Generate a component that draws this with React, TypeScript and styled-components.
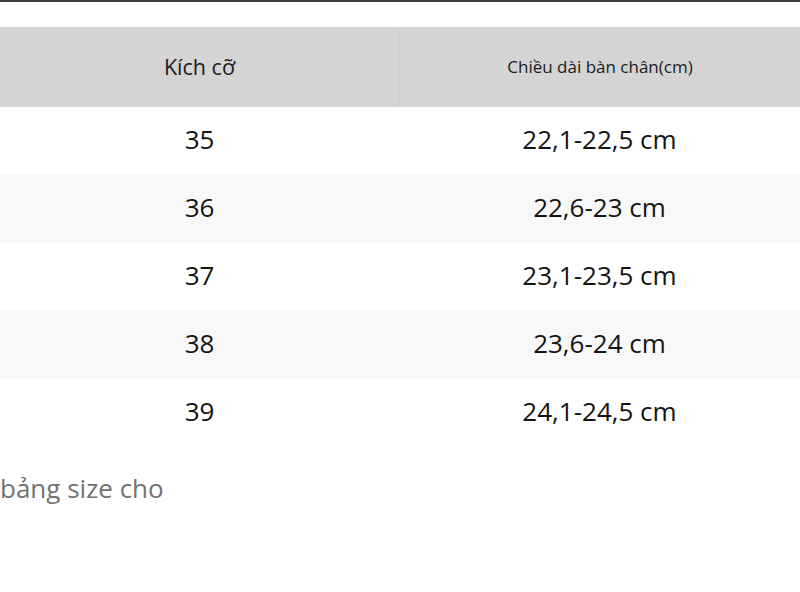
import React from "react";
import styled, { createGlobalStyle } from "styled-components";

const Global = createGlobalStyle`
  html, body { margin: 0; padding: 0; background: #fff; }
  body { font-family: "Open Sans", "Noto Sans", sans-serif; width: 800px; height: 592px; overflow: hidden; }
`;

const Page = styled.div`
  width: 800px;
  height: 592px;
  border-top: 2px solid #3a3a3a;
  box-sizing: border-box;
  display: flex;
  flex-direction: column;
`;

const Table = styled.div`
  margin-top: 25px;
  display: flex;
  flex-direction: column;
`;

const HeaderRow = styled.div`
  height: 80px;
  background: #d4d4d4;
  display: grid;
  grid-template-columns: 399px 1fr;
`;

const HeaderCell = styled.div<{ $small?: boolean; $divider?: boolean }>`
  display: flex;
  align-items: center;
  justify-content: center;
  color: #1a1a1a;
  font-size: ${(p) => (p.$small ? "17px" : "21.5px")};
  padding-bottom: 2px;
  border-left: ${(p) => (p.$divider ? "1px solid #cdcdcd" : "none")};
`;

const Row = styled.div<{ $striped: boolean }>`
  height: 68px;
  background: ${(p) => (p.$striped ? "#f8f8f8" : "#ffffff")};
  display: grid;
  grid-template-columns: 399px 1fr;
`;

const Cell = styled.div`
  display: flex;
  align-items: center;
  justify-content: center;
  color: #141414;
  font-size: 26px;
  padding-bottom: 4px;
`;

const Caption = styled.div`
  margin-top: 24px;
  font-size: 26px;
  color: #727272;
  line-height: 34px;
`;

const rows = [
  ["35", "22,1-22,5 cm"],
  ["36", "22,6-23 cm"],
  ["37", "23,1-23,5 cm"],
  ["38", "23,6-24 cm"],
  ["39", "24,1-24,5 cm"],
];

export default function App() {
  return (
    <>
      <Global />
      <Page>
        <Table>
          <HeaderRow>
            <HeaderCell>Kích cỡ</HeaderCell>
            <HeaderCell $small $divider>Chiều dài bàn chân(cm)</HeaderCell>
          </HeaderRow>
          {rows.map((r, i) => (
            <Row key={r[0]} $striped={i % 2 === 1}>
              <Cell>{r[0]}</Cell>
              <Cell>{r[1]}</Cell>
            </Row>
          ))}
        </Table>
        <Caption>bảng size cho</Caption>
      </Page>
    </>
  );
}
